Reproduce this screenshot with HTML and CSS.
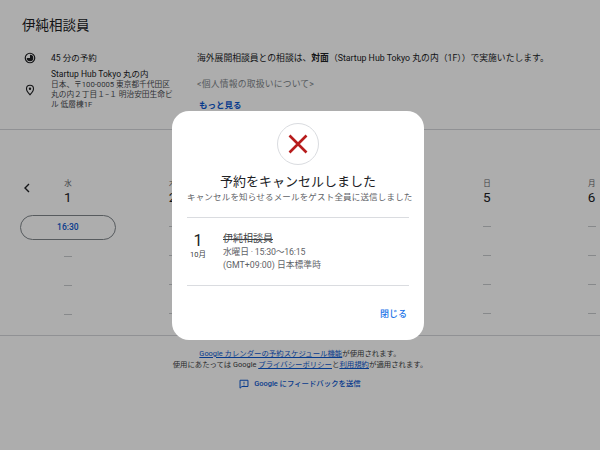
FILE: index.html
```html
<!DOCTYPE html>
<html lang="ja">
<head>
    <meta charset="UTF-8">
    <meta name="viewport" content="width=device-width, initial-scale=1.0">
    <title>伊純相談員</title>
    <link rel="stylesheet" href="styles.css">
</head>
<body>
    <div class="page">
        <header class="top">
            <h1>伊純相談員</h1>
            <div class="info">
                <div class="meta">
                    <div class="meta-row">
                        <svg class="meta-icon" viewBox="0 0 24 24"><circle cx="12" cy="12" r="9.500" fill="none" stroke="#202124" stroke-width="2.400"/><path d="M12 5.500a6.500 6.500 0 1 1-6.500 6.500H12z" fill="#202124"/></svg>
                        <span>45 分の予約</span>
                    </div>
                    <div class="meta-row place">
                        <svg class="meta-icon" viewBox="0 0 24 24"><path d="M12 2.500a7 7 0 0 0-7 7c0 5 7 12 7 12s7-7 7-12a7 7 0 0 0-7-7z" fill="none" stroke="#202124" stroke-width="2.200"/><circle cx="12" cy="9.500" r="2.400" fill="#202124"/></svg>
                        <div>
                            <div class="place-name">Startup Hub Tokyo 丸の内</div>
                            <div class="place-addr">日本、〒100-0005 東京都千代田区<br>丸の内２丁目１−１ 明治安田生命ビ<br>ル 低層棟1F</div>
                        </div>
                    </div>
                </div>
                <div class="desc">
                    <p>海外展開相談員との相談は、<b>対面</b>（Startup Hub Tokyo 丸の内（1F））で実施いたします。</p>
                    <p class="muted">&lt;個人情報の取扱いについて&gt;</p>
                    <a class="more" href="#">もっと見る</a>
                </div>
            </div>
        </header>

        <section class="calendar">
            <svg class="prev" viewBox="0 0 10 14"><path d="M7 3 3 7l4 4" fill="none" stroke="#202124" stroke-width="1.400"/></svg>
            <div class="days">
                <div class="day">
                    <div class="dow">水</div><div class="num">1</div>
                    <button class="slot">16:30</button>
                    <i></i><i></i><i></i>
                </div>
                <div class="day">
                    <div class="dow">木</div><div class="num">2</div>
                    <i></i><i></i><i></i><i></i>
                </div>
                <div class="day"></div>
                <div class="day"></div>
                <div class="day">
                    <div class="dow">日</div><div class="num">5</div>
                    <i></i><i></i><i></i><i></i>
                </div>
                <div class="day">
                    <div class="dow">月</div><div class="num">6</div>
                    <i></i><i></i><i></i><i></i>
                </div>
            </div>
        </section>

        <footer class="foot">
            <p><a href="#">Google カレンダーの予約スケジュール機能</a>が使用されます。</p>
            <p>使用にあたっては Google <a href="#">プライバシーポリシー</a>と<a href="#">利用規約</a>が適用されます。</p>
            <div class="feedback">
                <svg viewBox="0 0 24 24"><path d="M2.500 3h19v15H7l-4.500 4z" fill="none" stroke="#0b57d0" stroke-width="2.400"/><path d="M12 6.500v6M12 14v2" stroke="#0b57d0" stroke-width="2"/></svg>
                <span>Google にフィードバックを送信</span>
            </div>
        </footer>
    </div>

    <div class="overlay">
        <div class="dialog">
            <div class="mark">
                <svg viewBox="0 0 24 24"><path d="M3.500 3.500l17 17M20.500 3.500l-17 17" stroke="#b71c1c" stroke-width="2.600" fill="none"/></svg>
            </div>
            <h2>予約をキャンセルしました</h2>
            <p class="sub">キャンセルを知らせるメールをゲスト全員に送信しました</p>
            <div class="event">
                <div class="date">
                    <div class="date-num">1</div>
                    <div class="date-month">10月</div>
                </div>
                <div class="detail">
                    <div class="event-name">伊純相談員</div>
                    <div class="event-time">水曜日 · 15:30〜16:15</div>
                    <div>(GMT+09:00) 日本標準時</div>
                </div>
            </div>
            <div class="actions"><a href="#">閉じる</a></div>
        </div>
    </div>
</body>
</html>
```

FILE: styles.css
```css
* {
    box-sizing: border-box;
}
html, body {
    margin: 0;
    height: 100%;
    overflow: hidden;
}
body {
    font-family: Roboto, "Noto Sans CJK JP", sans-serif;
    color: #202124;
    background: white;
}
a {
    color: #0b57d0;
    text-decoration: none;
}
p {
    margin: 0;
}
.page {
    width: 600px;
    height: 450px;
    overflow: hidden;
}
.top {
    height: 130px;
    padding: 16px 22px 0;
    border-bottom: 1px solid #d4d6da;
}
h1 {
    margin: 0 0 17px;
    font-size: 13.500px;
    line-height: 19px;
    font-weight: 400;
}
.info {
    display: flex;
}
.meta {
    width: 175px;
    flex: none;
    font-size: 8.500px;
    line-height: 11px;
}
.meta-row {
    display: flex;
    align-items: center;
    gap: 15px;
    margin-bottom: 5px;
    padding-left: 2px;
}
.meta-icon {
    width: 12px;
    height: 12px;
    flex: none;
}
.place {
    margin-bottom: 0;
}
.place-addr {
    color: #4a4d52;
    font-size: 7.700px;
    line-height: 10px;
}
.desc {
    font-size: 8.800px;
    line-height: 13px;
    white-space: nowrap;
}
.desc b {
    font-weight: 700;
}
.muted {
    margin-top: 13px;
    color: #80868b;
    letter-spacing: .2px;
}
.more {
    display: block;
    margin: 8px 0 0 2px;
    font-size: 8.500px;
    font-weight: 700;
}
.calendar {
    position: relative;
    height: 206px;
    padding: 49px 0 0 15.500px;
    border-bottom: 1px solid #d4d6da;
}
.prev {
    position: absolute;
    left: 22px;
    top: 51px;
    width: 10px;
    height: 14px;
}
.days {
    display: flex;
    width: 630px;
}
.day {
    width: 104.750px;
    flex: none;
    display: flex;
    flex-direction: column;
    align-items: center;
}
.dow {
    font-size: 7.500px;
    line-height: 9px;
    color: #5f6368;
}
.num {
    font-size: 13.500px;
    line-height: 18px;
    margin-bottom: 8.500px;
}
.slot {
    width: 96px;
    height: 25px;
    margin: 0 0 5px;
    padding: 0;
    border: 1px solid #80868b;
    border-radius: 12.500px;
    background: white;
    color: #0b57d0;
    font: 500 8.500px Roboto, "Noto Sans CJK JP", sans-serif;
}
.day i {
    display: block;
    width: 8px;
    height: 1px;
    margin: 11.500px 0 16.500px;
    background: #c8cacd;
}
.foot {
    padding-top: 13px;
    text-align: center;
    font-size: 7.400px;
    line-height: 10.500px;
    color: #3c4043;
}
.foot a {
    text-decoration: underline;
}
.feedback {
    display: flex;
    justify-content: center;
    align-items: center;
    gap: 5px;
    margin-top: 9px;
    color: #0b57d0;
    font-weight: 500;
}
.feedback svg {
    width: 10px;
    height: 10px;
}
.overlay {
    position: fixed;
    inset: 0;
    background: rgba(0,0,0,0.32);
}
.dialog {
    position: absolute;
    left: 172px;
    top: 111px;
    width: 252px;
    height: 229px;
    padding: 12px 15px 0;
    border-radius: 17px;
    background: white;
    text-align: center;
}
.mark {
    width: 42px;
    height: 42px;
    margin: 0 auto 8px;
    display: flex;
    align-items: center;
    justify-content: center;
    border: 1px solid #dadce0;
    border-radius: 50%;
}
.mark svg {
    width: 24px;
    height: 24px;
}
h2 {
    margin: 0 0 1px;
    font-size: 13px;
    line-height: 18px;
    font-weight: 400;
}
.sub {
    font-size: 8.500px;
    line-height: 11px;
    color: #5f6368;
    white-space: nowrap;
    letter-spacing: .18px;
}
.event {
    display: flex;
    height: 69px;
    margin-top: 14px;
    padding-top: 14px;
    border-top: 1px solid #dadce0;
    border-bottom: 1px solid #dadce0;
    text-align: left;
}
.date {
    width: 22px;
    flex: none;
    margin-right: 14px;
    text-align: center;
}
.date-num {
    font-size: 16px;
    line-height: 18px;
}
.date-month {
    font-size: 7.500px;
    line-height: 10px;
    color: #3c4043;
}
.detail {
    font-size: 8.800px;
    line-height: 12.500px;
    color: #5f6368;
}
.event-name {
    color: #3c4043;
    font-size: 10px;
    line-height: 14px;
    text-decoration: line-through;
}
.event-time {
    letter-spacing: -.2px;
}
.actions {
    margin-top: 22px;
    padding-right: 2px;
    text-align: right;
    font-size: 9px;
    line-height: 12px;
    font-weight: 500;
}
.actions a {
    color: #1a73e8;
}
```
